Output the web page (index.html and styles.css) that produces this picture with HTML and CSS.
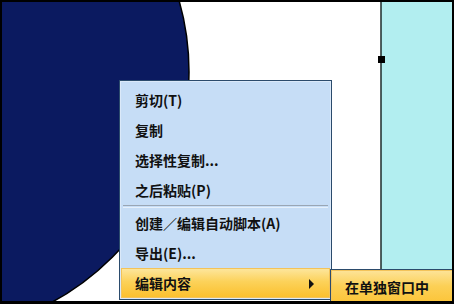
FILE: index.html
```html
<!DOCTYPE html>
<html lang="zh-CN">
<head>
<meta charset="utf-8">
<link rel="stylesheet" href="styles.css">
</head>
<body>
<div class="frame">
  <svg class="canvas" width="454" height="304" viewBox="0 0 454 304">
    <rect x="0" y="0" width="454" height="304" fill="#ffffff"/>
    <circle cx="-73" cy="72" r="262" fill="#0b1a60" stroke="#000" stroke-width="1.5"/>
    <rect x="381" y="0" width="73" height="304" fill="#b2eef0"/>
    <line x1="381" y1="0" x2="381" y2="304" stroke="#1c2a2a" stroke-width="1.5"/>
    <rect x="378" y="56" width="7" height="7" fill="#000"/>
  </svg>

  <div class="menu">
    <div class="item">剪切(T)</div>
    <div class="item">复制</div>
    <div class="item">选择性复制...</div>
    <div class="item">之后粘贴(P)</div>
    <div class="sep"></div>
    <div class="item">创建／编辑自动脚本(A)</div>
    <div class="item">导出(E)...</div>
    <div class="item active">编辑内容<span class="arrow"></span></div>
  </div>

  <div class="submenu">
    <div class="item">在单独窗口中</div>
  </div>

  <div class="border"></div>
</div>
</body>
</html>
```

FILE: styles.css
```css
html, body {
  margin: 0;
  padding: 0;
  background: #000;
}

.frame {
  position: relative;
  width: 454px;
  height: 304px;
  overflow: hidden;
  font-family: "Noto Sans CJK SC", "Liberation Sans", sans-serif;
  font-size: 14px;
  color: #111;
}

.canvas {
  position: absolute;
  left: 0;
  top: 0;
  display: block;
}

.border {
  position: absolute;
  inset: 0;
  border-style: solid;
  border-color: #000;
  border-width: 2px 2px 3px 2px;
  pointer-events: none;
}

.menu {
  position: absolute;
  left: 119px;
  top: 80px;
  width: 211px;
  padding: 4px 0 1px;
  background: #c6ddf6;
  border: 1px solid #2b4b6c;
  box-shadow: inset 0 0 0 1px #dbe9f9;
  display: flex;
  flex-direction: column;
}

.item {
  position: relative;
  height: 30px;
  line-height: 30px;
  padding-left: 15px;
  font-weight: 700;
  white-space: nowrap;
}

.sep {
  height: 3px;
  margin: 0 3px;
  border-top: 1px solid #9aa6b4;
  box-sizing: border-box;
  border-bottom: 1px solid #e6f0fb;
}

.item.active {
  margin: 0 1px;
  padding-left: 14px;
  background: linear-gradient(#fde7a0 0%, #fcd25a 45%, #fbbf2c 100%);
  box-shadow: inset 0 0 0 1px #f3c35a;
}

.arrow {
  position: absolute;
  right: 16px;
  top: 11px;
  width: 0;
  height: 0;
  border-top: 5px solid transparent;
  border-bottom: 5px solid transparent;
  border-left: 5px solid #111;
}

.submenu {
  position: absolute;
  left: 330px;
  top: 269px;
  width: 140px;
  height: 40px;
  background: linear-gradient(#fde49a 0%, #fcd056 40%, #fbbf2c 100%);
  border: 1px solid #2b4b6c;
  box-shadow: inset 0 0 0 1px #f3c35a;
}

.submenu .item {
  padding-left: 14px;
  height: 36px;
  line-height: 34px;
}
```
